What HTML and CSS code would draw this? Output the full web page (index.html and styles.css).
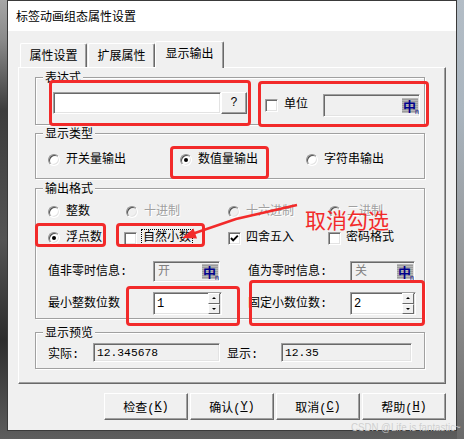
FILE: index.html
```html
<!DOCTYPE html>
<html lang="zh-CN">
<head>
<meta charset="utf-8">
<title>标签动画组态属性设置</title>
<link rel="stylesheet" href="styles.css">
</head>
<body>
<div class="screen">
  <div class="window">
    <div class="titlebar">标签动画组态属性设置</div>
    <div class="client">
      <div class="tabs">
        <div class="tab t1">属性设置</div>
        <div class="tab t2">扩展属性</div>
        <div class="tab active">显示输出</div>
      </div>
      <div class="panel">
        <div class="group g-expr">
          <div class="legend">表达式</div>
          <div class="row expr-row">
            <div class="field expr"></div>
            <div class="btn qbtn">?</div>
            <div class="opt unit-check"><span class="box"></span><span>单位</span></div>
            <div class="field unit ro"><span class="ime">中<i>n</i></span></div>
          </div>
        </div>
        <div class="group g-type">
          <div class="legend">显示类型</div>
          <div class="row type-row">
            <div class="opt w132"><span class="radio"></span>开关量输出</div>
            <div class="opt w126"><span class="radio on"></span>数值量输出</div>
            <div class="opt"><span class="radio"></span>字符串输出</div>
          </div>
        </div>
        <div class="group g-fmt">
          <div class="legend">输出格式</div>
          <div class="grid4 fmt-r1">
            <div class="opt"><span class="radio"></span>整数</div>
            <div class="opt dis"><span class="radio"></span>十进制</div>
            <div class="opt dis"><span class="radio"></span>十六进制</div>
            <div class="opt dis"><span class="radio"></span>二进制</div>
          </div>
          <div class="grid4 fmt-r2">
            <div class="opt"><span class="radio on"></span>浮点数</div>
            <div class="opt shift"><span class="box"></span><span class="focus">自然小数</span></div>
            <div class="opt tight"><span class="box"><svg width="11" height="11" viewBox="0 0 11 11"><polyline points="2,5 4.2,7.4 8.8,2.6" fill="none" stroke="#000" stroke-width="1.9"/></svg></span>四舍五入</div>
            <div class="opt tight shift1"><span class="box"></span>密码格式</div>
          </div>
          <div class="pair fmt-r3">
            <span>值非零时信息:</span>
            <div class="field msg1 ro"><span class="gray">开</span><span class="ime">中<i>n</i></span></div>
            <span>值为零时信息:</span>
            <div class="field msg2 ro"><span class="gray">关</span><span class="ime">中<i>n</i></span></div>
          </div>
          <div class="pair fmt-r4">
            <span>最小整数位数</span>
            <div class="field spin s1"><span class="val">1</span><span class="arrows"><b class="up"></b><b class="dn"></b></span></div>
            <span>固定小数位数:</span>
            <div class="field spin s2"><span class="val">2</span><span class="arrows"><b class="up"></b><b class="dn"></b></span></div>
          </div>
        </div>
        <div class="group g-prev">
          <div class="legend">显示预览</div>
          <div class="row prev-row">
            <span class="lbl-a">实际:</span>
            <div class="field pv1 ro"><span class="num">12.345678</span></div>
            <span class="lbl-b">显示:</span>
            <div class="field pv2 ro"><span class="num">12.35</span></div>
          </div>
        </div>
      </div>
      <div class="buttons">
        <div class="btn dlg">检查(<u>K</u>)</div>
        <div class="btn dlg">确认(<u>Y</u>)</div>
        <div class="btn dlg">取消(<u>C</u>)</div>
        <div class="btn dlg">帮助(<u>H</u>)</div>
      </div>
    </div>
  </div>

  <div class="mark m1"></div>
  <div class="mark m2"></div>
  <div class="mark m3"></div>
  <div class="mark m4"></div>
  <div class="mark m5"></div>
  <div class="mark m6"></div>
  <div class="mark m7"></div>
  <svg class="arrow" width="464" height="439" viewBox="0 0 464 439">
    <polyline points="297,205 236,219 192,234" fill="none" stroke="#f22a2a" stroke-width="2.4"/>
    <polygon points="182,238 193.5,228.5 197,238.5" fill="#f22a2a"/>
  </svg>
  <div class="note">取消勾选</div>
  <div class="watermark">CSDN @Life is fantastic~</div>
</div>
</body>
</html>
```

FILE: styles.css
```css
* { box-sizing: border-box; }
html, body { margin: 0; padding: 0; }
body {
  width: 464px;
  height: 439px;
  overflow: hidden;
  font-family: "Liberation Mono", "Noto Sans CJK SC", monospace;
  font-size: 12px;
  color: #000;
}
.screen {
  position: relative;
  width: 464px;
  height: 439px;
  overflow: hidden;
  background:
    linear-gradient(to bottom, #b3bdc6 0, #aab5bf 110px, #8f8f8f 300px, #6a6a6a 439px) right top / 7px 100% no-repeat,
    linear-gradient(to bottom, #a6a6a6 0, #8a8a8a 40px, #3c3c3c 110px, #545454 240px, #2c2c2c 340px, #5e5e5e 439px);
}
.window {
  margin-left: 7px;
  width: 450px;
  height: 431px;
  border: 1px solid #3a3a3a;
  background: #f0f0f0;
  display: flex;
  flex-direction: column;
}
.titlebar {
  height: 30px;
  background: #fff;
  padding-left: 8px;
  line-height: 30px;
  font-family: "Noto Sans CJK SC", sans-serif;
  font-size: 12px;
}
.client { flex: 1; display: flex; flex-direction: column; }

/* tabs */
.tabs {
  height: 36px;
  display: flex;
  align-items: flex-end;
  padding-left: 12px;
}
.tab {
  width: 67px;
  height: 24px;
  padding-top: 3px;
  line-height: 20px;
  text-align: center;
  border: 1px solid;
  border-bottom: none;
  border-color: #fff #696969 transparent #fff;
  border-radius: 2px 2px 0 0;
  box-shadow: inset -1px 0 0 #a0a0a0;
}
.tab.t1 { margin-right: 1px; }
.tab.active {
  width: 69px;
  height: 27px;
  margin-bottom: -1px;
  position: relative;
  z-index: 1;
  background: #f0f0f0;
}

/* panel */
.panel {
  margin-left: 10px;
  width: 428px;
  height: 317px;
  border: 1px solid;
  border-color: #fff #696969 #696969 #fff;
  box-shadow: inset -1px -1px 0 #a0a0a0;
  padding: 9px 0 0 16px;
  display: flex;
  flex-direction: column;
}
.group {
  width: 390px;
  border: 1px solid #a0a0a0;
  box-shadow: inset 1px 1px 0 #fff, 1px 1px 0 #fff;
  display: flex;
  flex-direction: column;
}
.legend {
  align-self: flex-start;
  margin: -6px 0 -8px 7px;
  padding: 0 2px;
  height: 14px;
  line-height: 14px;
  background: #f0f0f0;
  position: relative;
}
.g-expr { height: 48px; }
.g-type { height: 46px; margin-top: 8px; }
.g-fmt { height: 131px; margin-top: 9px; }
.g-prev { height: 37px; margin-top: 13px; }

.row { display: flex; align-items: center; }
.expr-row { margin-top: 14px; padding-left: 17px; align-items: flex-start; }
.type-row { margin-top: 19px; padding-left: 12px; height: 14px; }
.prev-row { margin-top: 10px; padding-left: 12px; }

.opt {
  display: flex;
  align-items: center;
  gap: 6px;
  line-height: 14px;
  height: 14px;
  white-space: nowrap;
}
.opt.tight { gap: 5px; }
.opt.shift { margin-left: -2px; }
.opt.shift1 { margin-left: -1px; }
.w132 { width: 132px; }
.w126 { width: 126px; }
.dis { color: #a0a0a0; text-shadow: 1px 1px 0 #fff; }

.grid4 {
  display: grid;
  grid-template-columns: 78px 102px 101px auto;
  padding-left: 12px;
  height: 14px;
  align-items: center;
}
.fmt-r1 { margin-top: 16px; }
.fmt-r2 { margin-top: 12px; }

.pair {
  display: grid;
  grid-template-columns: 105px 95px 102px auto;
  padding-left: 12px;
  align-items: center;
  line-height: 14px;
  white-space: nowrap;
}
.fmt-r3 { margin-top: 16px; }
.fmt-r4 { margin-top: 10px; }

/* radio & checkbox */
.radio {
  flex: none;
  width: 12px;
  height: 12px;
  border-radius: 50%;
  background: #fff;
  border: 1px solid;
  border-color: #909090 #fff #fff #909090;
  box-shadow: inset 1px 1px 0 #505050, inset -1px -1px 0 #e3e3e3;
  display: flex;
  align-items: center;
  justify-content: center;
}
.dis .radio { background: #f0f0f0; }
.radio.on::after {
  content: "";
  width: 4px;
  height: 4px;
  border-radius: 50%;
  background: #000;
}
.box {
  flex: none;
  width: 13px;
  height: 13px;
  background: #fff;
  border: 1px solid;
  border-color: #a0a0a0 #fff #fff #a0a0a0;
  box-shadow: inset 1px 1px 0 #696969, inset -1px -1px 0 #e3e3e3;
  display: flex;
}
.box svg { display: block; }
.focus {
  outline: 1px dotted #000;
  outline-offset: 1px;
}
.unit-check { margin: 7px 0 0 18px; height: 13px; line-height: 13px; }

/* fields */
.field {
  border: 1px solid;
  border-color: #a0a0a0 #fff #fff #a0a0a0;
  box-shadow: inset 1px 1px 0 #696969, inset -1px -1px 0 #e3e3e3;
  background: #fff;
  display: flex;
  align-items: center;
  line-height: 14px;
}
.field.ro { background: #f0f0f0; }
.expr { width: 168px; height: 22px; }
.unit { width: 97px; height: 23px; margin: 2px 0 0 15px; justify-content: flex-end; padding-right: 1px; }
.msg1 { width: 67px; height: 21px; padding: 0 1px 0 4px; justify-content: space-between; }
.msg2 { width: 65px; height: 21px; padding: 0 1px 0 4px; justify-content: space-between; }
.gray { color: #808080; }
.s1 { width: 69px; height: 23px; }
.s2 { width: 66px; height: 23px; }
.pv1 { width: 127px; height: 19px; padding-left: 3px; }
.pv2 { width: 131px; height: 19px; padding-left: 3px; }
.num { font-family: "Liberation Mono", monospace; font-size: 11.3px; }
.lbl-a { width: 45px; }
.lbl-b { width: 54px; margin-left: 7px; }

.ime {
  position: relative;
  width: 16px;
  height: 15px;
  background: repeating-linear-gradient(0deg, #b8b8b8 0 1px, #9c9c9c 1px 2px);
  color: #00008b;
  font-family: "Noto Sans CJK SC", sans-serif;
  font-weight: bold;
  font-size: 13px;
  line-height: 15px;
  text-align: left;
  padding-left: 1px;
}
.ime i {
  position: absolute;
  right: -1px;
  bottom: -2px;
  font-style: normal;
  font-weight: normal;
  font-size: 7px;
  line-height: 7px;
  font-family: "Liberation Sans", sans-serif;
}

.spin .val { flex: 1; padding-left: 3px; }
.arrows {
  display: flex;
  flex-direction: column;
  width: 12px;
  height: 21px;
  margin-right: 1px;
}
.arrows b {
  flex: 1;
  background: #f0f0f0;
  border: 1px solid;
  border-color: #fff #696969 #696969 #fff;
  display: flex;
  align-items: center;
  justify-content: center;
}
.arrows .up::before {
  content: "";
  border-left: 2px solid transparent;
  border-right: 2px solid transparent;
  border-bottom: 2px solid #000;
}
.arrows .dn::before {
  content: "";
  border-left: 2px solid transparent;
  border-right: 2px solid transparent;
  border-top: 2px solid #000;
}

/* buttons */
.btn {
  background: #f0f0f0;
  border: 1px solid;
  border-color: #fff #696969 #696969 #fff;
  box-shadow: inset -1px -1px 0 #a0a0a0;
  display: flex;
  align-items: center;
  justify-content: center;
}
.qbtn { width: 26px; height: 22px; }
.buttons {
  display: flex;
  justify-content: flex-end;
  gap: 2px;
  padding-right: 10px;
  margin-top: 9px;
}
.dlg { width: 84px; height: 27px; }

/* annotations */
.mark {
  position: absolute;
  border: 3px solid #f22a2a;
  border-radius: 4px;
}
.m1 { left: 49px; top: 80px; width: 202px; height: 46px; }
.m2 { left: 258px; top: 81px; width: 171px; height: 46px; }
.m3 { left: 170px; top: 146px; width: 99px; height: 33px; }
.m4 { left: 35px; top: 223px; width: 71px; height: 24px; }
.m5 { left: 116px; top: 223px; width: 89px; height: 24px; }
.m6 { left: 126px; top: 286px; width: 114px; height: 40px; }
.m7 { left: 249px; top: 280px; width: 176px; height: 46px; }
.arrow { position: absolute; left: 0; top: 0; pointer-events: none; }
.note {
  position: absolute;
  left: 305px;
  top: 209px;
  font-family: "Noto Sans CJK SC", sans-serif;
  font-size: 21px;
  line-height: 20px;
  color: #f22a2a;
  white-space: nowrap;
}
.watermark {
  position: absolute;
  left: 351px;
  top: 421px;
  font-family: "Liberation Sans", sans-serif;
  font-size: 11px;
  line-height: 12px;
  color: rgba(205, 205, 205, 0.95);
  white-space: nowrap;
  transform: scaleX(0.88);
  transform-origin: left top;
}
```
